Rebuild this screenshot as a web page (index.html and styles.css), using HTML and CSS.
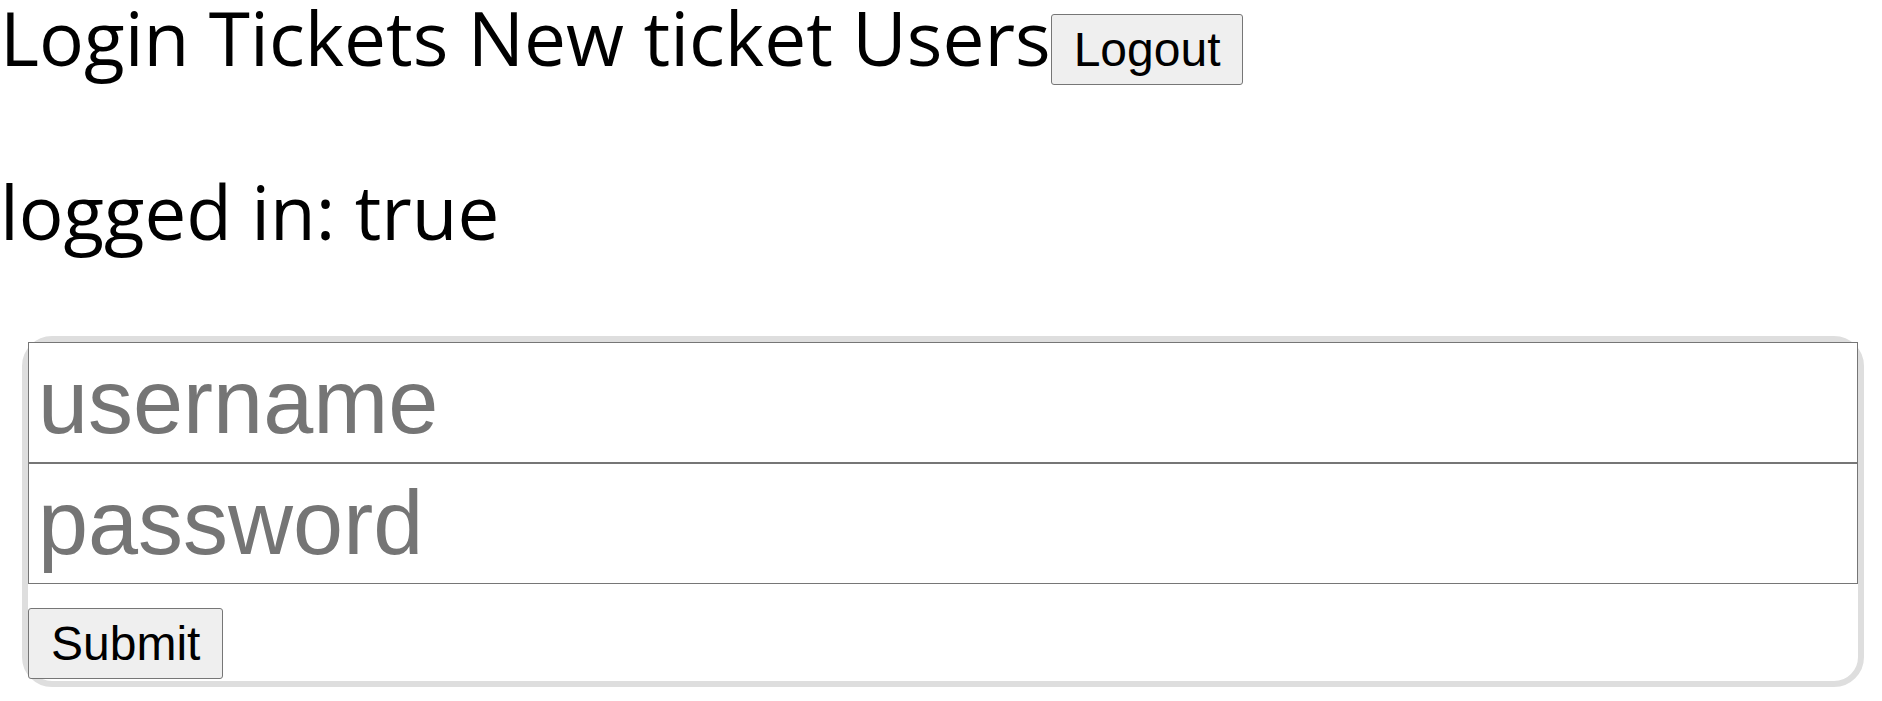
FILE: index.html
```html
<!DOCTYPE html>
<html lang="en">
<head>
<meta charset="utf-8">
<title>Tickets</title>
<link rel="stylesheet" href="styles.css">
</head>
<body>
<nav class="nav"><a class="nav-link" href="#">Login</a> <a class="nav-link" href="#">Tickets</a> <a class="nav-link" href="#">New ticket</a> <a class="nav-link" href="#">Users</a><button class="btn" type="button">Logout</button></nav>
<p class="status">logged in: true</p>
<form class="card">
  <input class="field" type="text" placeholder="username">
  <input class="field" type="password" placeholder="password">
  <button class="btn btn-submit" type="submit">Submit</button>
</form>
</body>
</html>
```

FILE: styles.css
```css
html, body {
  margin: 0;
  padding: 0;
  background: #ffffff;
}

body {
  font-family: "Open Sans", "Noto Sans", sans-serif;
  font-size: 74.5px;
  line-height: 74px;
  color: #000000;
}

.nav {
  display: block;
  white-space: nowrap;
  font-size: 74.8px;
}

.nav-link {
  color: #000000;
  text-decoration: none;
}

.btn {
  font-family: "Liberation Sans", Arial, sans-serif;
  font-size: 48px;
  line-height: normal;
  color: #000000;
  background: #efefef;
  border: 1px solid #767676;
  border-radius: 3px;
  padding: 7px 22px;
  margin: 0;
}

.status {
  margin: 89px 0 0 0;
}

.card {
  margin: 88px 18px 0 22px;
  border: 6px solid #dedede;
  border-radius: 30px;
  display: flex;
  flex-direction: column;
  align-items: flex-start;
  padding: 0 0 2px 0;
}

.field {
  display: block;
  width: 100%;
  box-sizing: border-box;
  height: 121px;
  margin: 0;
  padding: 8px 9px;
  border: 1px solid #767676;
  border-radius: 0;
  font-family: "Liberation Sans", Arial, sans-serif;
  font-size: 90px;
  color: #000000;
  background: #ffffff;
}

.field::placeholder {
  color: #757575;
}

.btn-submit {
  margin-top: 24px;
}
```
